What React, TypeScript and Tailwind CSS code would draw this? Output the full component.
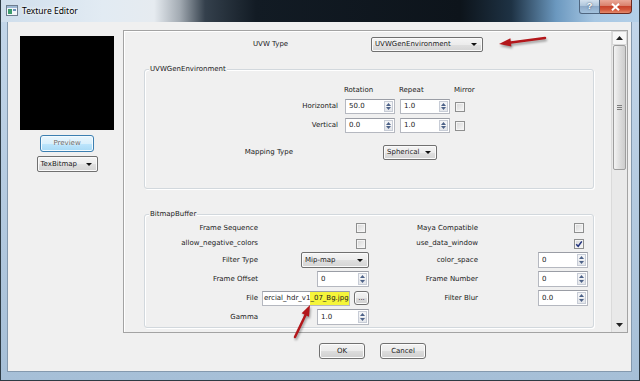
import type { ReactNode } from "react";

const combo =
  "flex items-center justify-between rounded-[2px] border border-[#707070] bg-[linear-gradient(#f4f4f4,#ececec_50%,#e0e0e0_50%,#d4d4d4)] pl-[3px] pr-[5px] shadow-[inset_0_0_0_1px_#fafafa]";

function Tri({ up }: { up?: boolean }) {
  return (
    <svg width="5" height="3" viewBox="0 0 5 3">
      <polygon points={up ? "0,3 5,3 2.5,0" : "0,0 5,0 2.5,3"} fill="#4d6288" />
    </svg>
  );
}

function Combo({ label, className }: { label: string; className: string }) {
  return (
    <div className={`${combo} ${className}`}>
      <span className="leading-none">{label}</span>
      <svg width="6" height="3" viewBox="0 0 6 3">
        <polygon points="0,0 6,0 3,3" fill="#111" />
      </svg>
    </div>
  );
}

function Spin({ value, className }: { value: string; className: string }) {
  return (
    <div className={`flex border border-[#b5b8c0] border-t-[#9a9da5] bg-white ${className}`}>
      <span className="flex flex-1 items-center pl-[3px] leading-none">{value}</span>
      <div className="my-[1px] mr-[1px] flex w-[9px] flex-col border border-[#c7ccd6] bg-[#f3f4f6]">
        <div className="flex flex-1 items-center justify-center">
          <Tri up />
        </div>
        <div className="flex flex-1 items-center justify-center bg-[#e6e8ec]">
          <Tri />
        </div>
      </div>
    </div>
  );
}

function Check({ on }: { on?: boolean }) {
  return (
    <div className="flex h-[10px] w-[10px] items-center justify-center border border-[#8e8f8f] bg-[linear-gradient(135deg,#d6d6d6,#f8f8f8)] shadow-[inset_0_0_0_1px_#f4f4f4]">
      {on ? (
        <svg width="8" height="8" viewBox="0 0 8 8">
          <path d="M1.2 4.2 L3.2 6.3 L6.8 1.4" stroke="#23347d" strokeWidth="1.5" fill="none" />
        </svg>
      ) : null}
    </div>
  );
}

function Btn({ children, className }: { children: ReactNode; className: string }) {
  return (
    <div
      className={`flex items-center justify-center rounded-[3px] border border-[#707070] bg-[linear-gradient(#f2f2f2,#ebebeb_50%,#dddddd_50%,#cfcfcf)] leading-none shadow-[inset_0_0_0_1px_#fcfcfc] ${className}`}
    >
      {children}
    </div>
  );
}

function Group({ title, className, children }: { title: string; className: string; children: ReactNode }) {
  return (
    <div
      className={`relative rounded-[3px] border border-[#d2d8dd] shadow-[inset_1px_1px_0_#fff,1px_1px_0_#fff] ${className}`}
    >
      <span className="absolute left-[4px] top-[-6px] bg-[#f0f0f0] px-[1px] leading-[10px]">{title}</span>
      {children}
    </div>
  );
}

function Label({ children }: { children: ReactNode }) {
  return <span className="self-center text-right leading-none">{children}</span>;
}

function Cell({ children }: { children?: ReactNode }) {
  return <div className="flex items-center justify-end">{children}</div>;
}

function TitleBar() {
  return (
    <div className="flex h-[22px] items-start bg-[linear-gradient(90deg,#cfdeec_0%,#e2ebf3_16%,#e6ebf0_24%,#a3abb3_28%,#34404c_32%,#121b24_40%,#0d141b_72%,#1e3244_80%,#6b98bf_87%,#a7c7e3_93%,#b4d0e8_100%)]">
      <svg className="ml-[5px] mt-[5px]" width="12" height="11" viewBox="0 0 12 11">
        <rect x="0.5" y="0.5" width="11" height="10" fill="#f3f6f9" stroke="#6d7d8e" />
        <rect x="1" y="1" width="10" height="2" fill="#9db8d4" />
        <rect x="2" y="4" width="4" height="5" fill="#3c9b6c" />
        <rect x="7" y="4" width="3" height="2" fill="#6b8fb8" />
      </svg>
      <span className="ml-[4px] mt-[5px] font-['Noto_Sans',sans-serif] text-[8.5px] leading-[12px] text-black [text-shadow:0_0_5px_#fff,0_0_3px_#fff]">
        Texture Editor
      </span>
      <div className="flex-1" />
      <div className="mr-[7px] flex h-[14px]">
        <div className="flex w-[21px] items-center justify-center rounded-bl-[3px] border border-t-0 border-[#4f6680] bg-[linear-gradient(#d3e1ee,#afc6dc_45%,#8fabc9_50%,#a3c2de)] font-['Liberation_Sans',sans-serif] text-[9px] font-bold leading-none text-white [text-shadow:0_0_2px_#2a3d55]">
          ?
        </div>
        <div className="flex w-[32px] items-center justify-center rounded-br-[4px] border border-l-0 border-t-0 border-[#6b2a20] bg-[linear-gradient(#eaa898,#d9806b_45%,#c7432b_50%,#d3583b_75%,#e48c6e)]">
          <svg width="9" height="8" viewBox="0 0 9 8">
            <path d="M1 0.8 L8 7.2 M8 0.8 L1 7.2" stroke="#fff" strokeWidth="2" />
          </svg>
        </div>
      </div>
    </div>
  );
}

function Scrollbar() {
  return (
    <div className="flex w-[16px] flex-col border-l border-[#dadada] bg-[#e9e9e9]">
      <div className="flex h-[14px] items-center justify-center border border-[#d8d8d8] bg-[#f7f7f7]">
        <svg width="7" height="4" viewBox="0 0 7 4">
          <polygon points="0,4 7,4 3.5,0" fill="#222" />
        </svg>
      </div>
      <div className="mx-[1px] flex h-[125px] flex-col items-center justify-center gap-[1px] rounded-[2px] border border-[#9d9d9d] bg-[linear-gradient(90deg,#f3f3f3,#dcdcdc_55%,#cdcdcd)]">
        <div className="h-[1px] w-[5px] bg-[#7e7e7e]" />
        <div className="h-[1px] w-[5px] bg-[#7e7e7e]" />
        <div className="h-[1px] w-[5px] bg-[#7e7e7e]" />
      </div>
      <div className="flex-1" />
      <div className="flex h-[14px] items-center justify-center">
        <svg width="7" height="4" viewBox="0 0 7 4">
          <polygon points="0,0 7,0 3.5,4" fill="#222" />
        </svg>
      </div>
    </div>
  );
}

function ScrollArea() {
  return (
    <div className="ml-[9px] flex h-[303px] w-[505px] border border-[#a3a3a3] bg-[#f0f0f0] shadow-[inset_1px_1px_0_#fff]">
      <div className="flex w-[487px] flex-col overflow-hidden">
        <div className="flex items-center pt-[6px]">
          <span className="w-[247px] pl-[129px] leading-none">UVW Type</span>
          <Combo label="UVWGenEnvironment" className="h-[15px] w-[112px]" />
        </div>

        <Group title="UVWGenEnvironment" className="ml-[20px] mt-[17px] h-[120px] w-[450px] shrink-0">
          <div className="flex flex-col pt-[15px]">
            <div className="flex h-[10px] items-center pl-[199px] leading-none">
              <span className="w-[55px]">Rotation</span>
              <span className="w-[55px]">Repeat</span>
              <span>Mirror</span>
            </div>
            <div className="mt-[4px] flex h-[15px] items-center">
              <span className="w-[193px] text-right leading-none">Horizontal</span>
              <Spin value="50.0" className="ml-[7px] h-[15px] w-[50px]" />
              <Spin value="1.0" className="ml-[5px] h-[15px] w-[50px]" />
              <div className="ml-[5px]">
                <Check />
              </div>
            </div>
            <div className="mt-[4px] flex h-[15px] items-center">
              <span className="w-[193px] text-right leading-none">Vertical</span>
              <Spin value="0.0" className="ml-[7px] h-[15px] w-[50px]" />
              <Spin value="1.0" className="ml-[5px] h-[15px] w-[50px]" />
              <div className="ml-[5px]">
                <Check />
              </div>
            </div>
            <div className="mt-[12px] flex h-[15px] items-center">
              <span className="w-[148px] text-right leading-none">Mapping Type</span>
              <Combo label="Spherical" className="ml-[90px] h-[15px] w-[54px]" />
            </div>
          </div>
        </Group>

        <Group title="BitmapBuffer" className="ml-[20px] mt-[25px] h-[114px] w-[450px] shrink-0">
          <div className="grid grid-cols-[113px_111px_109px_110px] grid-rows-[14px_11px_16px_16px_16px_16px] gap-y-[3px] pt-[6px]">
            <Label>Frame Sequence</Label>
            <Cell>
              <div className="mr-[3px]">
                <Check />
              </div>
            </Cell>
            <Label>Maya Compatible</Label>
            <Cell>
              <div className="mr-[4px]">
                <Check />
              </div>
            </Cell>

            <Label>allow_negative_colors</Label>
            <Cell>
              <div className="mr-[3px]">
                <Check />
              </div>
            </Cell>
            <Label>use_data_window</Label>
            <Cell>
              <div className="mr-[4px]">
                <Check on />
              </div>
            </Cell>

            <Label>Filter Type</Label>
            <Cell>
              <Combo label="Mip-map" className="h-[16px] w-[68px]" />
            </Cell>
            <Label>color_space</Label>
            <Cell>
              <Spin value="0" className="h-[16px] w-[50px]" />
            </Cell>

            <Label>Frame Offset</Label>
            <Cell>
              <Spin value="0" className="h-[16px] w-[52px]" />
            </Cell>
            <Label>Frame Number</Label>
            <Cell>
              <Spin value="0" className="h-[16px] w-[50px]" />
            </Cell>

            <Label>File</Label>
            <Cell>
              <div className="flex h-[15px] w-[88px] overflow-hidden whitespace-nowrap border border-[#b5b8c0] border-t-[#9a9da5] bg-white pl-[1px]">
                <span className="flex shrink-0 items-center leading-none">ercial_hdr_v1</span>
                <span className="flex shrink-0 items-center bg-[#f5f53a] pr-[1px] leading-none">_07_Bg.jpg</span>
              </div>
              <Btn className="ml-[4px] h-[14px] w-[15px]">...</Btn>
            </Cell>
            <Label>Filter Blur</Label>
            <Cell>
              <Spin value="0.0" className="h-[16px] w-[50px]" />
            </Cell>

            <Label>Gamma</Label>
            <Cell>
              <Spin value="1.0" className="h-[16px] w-[52px]" />
            </Cell>
            <div />
            <div />
          </div>
        </Group>
      </div>
      <Scrollbar />
    </div>
  );
}

export default function App() {
  return (
    <div className="relative flex h-[381px] w-[640px] flex-col overflow-hidden border-x border-b border-[#2e3b44] bg-[linear-gradient(#c4d7ea,#a6bfd7)] font-['DejaVu_Sans',Tahoma,sans-serif] text-[7px] text-[#1a1a1a]">
      <TitleBar />
      <div className="flex h-[350px]">
        <div className="w-[6px]" />
        <div className="flex h-[350px] w-[625px] flex-col border-x border-b border-[#8499ae] bg-[#f0f0f0]">
          <div className="flex pt-[8px]">
            <div className="ml-[12px] mt-[6px] flex w-[94px] flex-col items-center">
              <div className="h-[94px] w-[94px] bg-black" />
              <div className="mt-[5px] flex h-[17px] w-[54px] items-center justify-center rounded-[3px] border border-[#3c7fb1] bg-[linear-gradient(#eaf6fd,#d9f0fc_50%,#bee6fd_50%,#a7d9f5)] leading-none text-[#6a6a6a] shadow-[inset_0_0_0_1px_#f3fbff] [text-shadow:0_0_2px_#fff]">
                Preview
              </div>
              <Combo label="TexBitmap" className="mt-[4px] h-[16px] w-[61px]" />
            </div>
            <ScrollArea />
          </div>
          <div className="ml-[115px] mt-[10px] flex w-[505px] justify-center gap-[15px] pr-[6px]">
            <Btn className="h-[16px] w-[46px]">OK</Btn>
            <Btn className="h-[16px] w-[46px]">Cancel</Btn>
          </div>
        </div>
      </div>
      <div className="h-[8px]" />

      <svg
        className="pointer-events-none absolute left-[494px] top-[33px] drop-shadow-[1px_2px_1px_rgba(0,0,0,0.35)]"
        width="54"
        height="18"
        viewBox="0 0 54 18"
      >
        <path d="M50 5 L14 9.8" stroke="#b3171b" strokeWidth="2.5" strokeLinecap="round" />
        <polygon points="4,11 16.4,13.6 15.4,5.3" fill="#b3171b" />
      </svg>
      <svg
        className="pointer-events-none absolute left-[288px] top-[300px] drop-shadow-[1px_2px_1px_rgba(0,0,0,0.35)]"
        width="26"
        height="42"
        viewBox="0 0 26 42"
      >
        <path d="M6 37 L17 14" stroke="#b3171b" strokeWidth="2.5" strokeLinecap="round" />
        <polygon points="21,5 20,16.8 12.6,13.3" fill="#b3171b" />
      </svg>
    </div>
  );
}
